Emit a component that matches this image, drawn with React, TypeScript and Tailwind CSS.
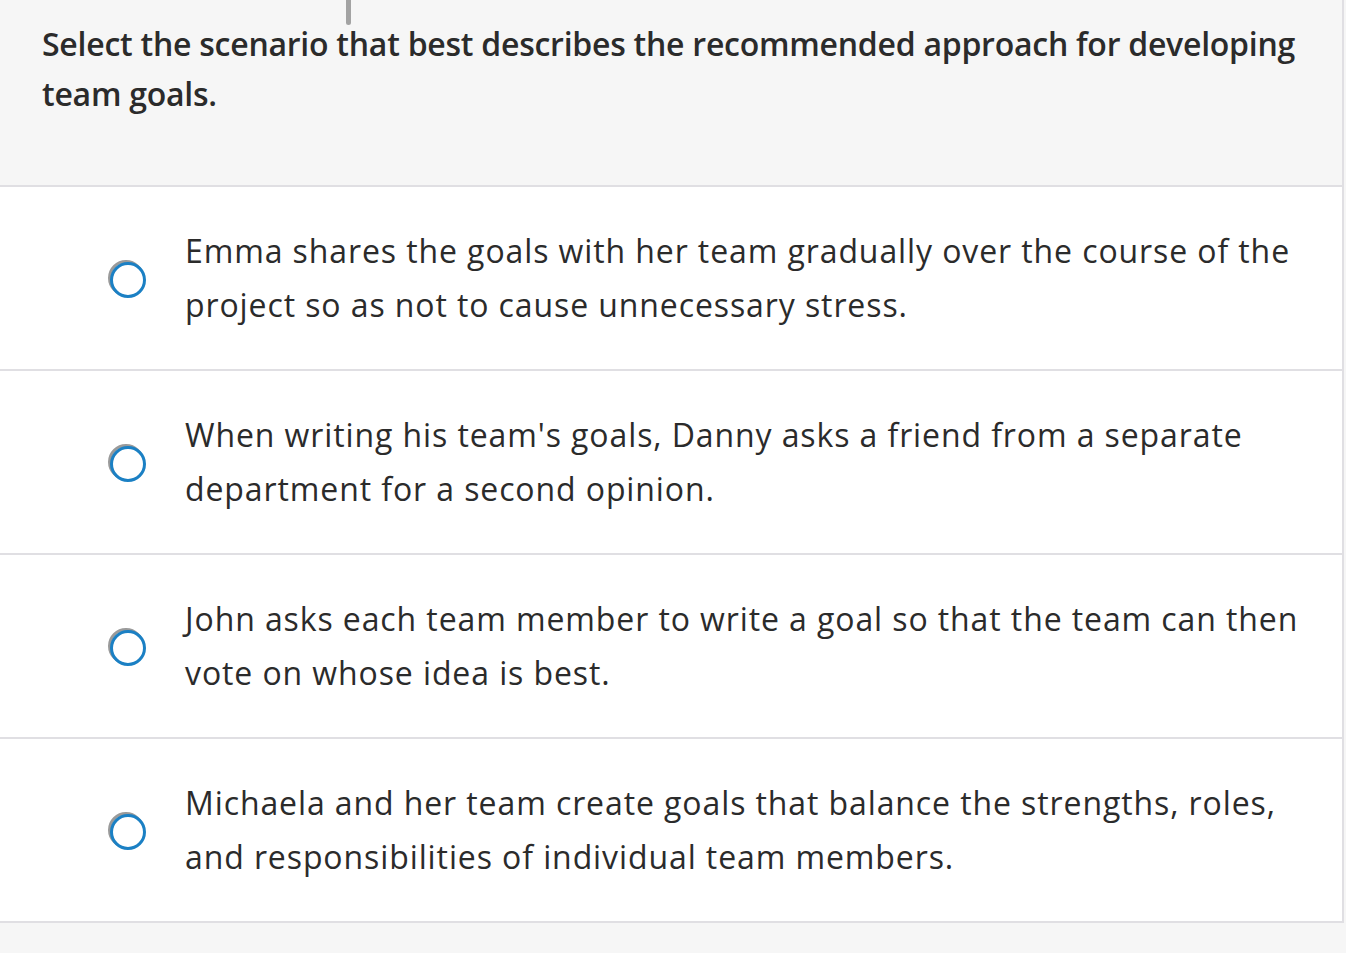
import React from "react";

const options = [
  "Emma shares the goals with her team gradually over the course of the project so as not to cause unnecessary stress.",
  "When writing his team's goals, Danny asks a friend from a separate department for a second opinion.",
  "John asks each team member to write a goal so that the team can then vote on whose idea is best.",
  "Michaela and her team create goals that balance the strengths, roles, and responsibilities of individual team members.",
];

const Radio: React.FC = () => (
  <div className="relative w-[36px] h-[36px] shrink-0">
    <div className="absolute -left-[2px] -top-[2px] w-[36px] h-[36px] rounded-full border-[3px] border-[#9a9a9a]" />
    <div className="absolute inset-0 rounded-full border-[3px] border-[#1b80c4] bg-white" />
  </div>
);

const App: React.FC = () => {
  return (
    <div
      className="relative min-h-[953px] bg-[#f6f6f6] text-[#2b2b2b]"
      style={{ fontFamily: "'Open Sans', Lato, sans-serif" }}
    >
      <div className="absolute left-[346px] top-0 w-[5px] h-[25px] rounded-b bg-[#a3a3a3]" />
      <div className="w-[1344px] border-r-2 border-[#e0dfe3]">
        <div className="h-[187px] border-b-2 border-[#e0dfe3] pl-[42px] pr-[36px] pt-[19px]">
          <p className="text-[32px] leading-[50px] font-semibold tracking-[-0.25px]">
            Select the scenario that best describes the recommended approach for developing team goals.
          </p>
        </div>
        {options.map((text) => (
          <div
            key={text}
            className="h-[184px] bg-white border-b-2 border-[#e0dfe3] flex items-center"
          >
            <div className="w-[185px] pl-[110px] pt-[4px] flex">
              <Radio />
            </div>
            <p className="flex-1 pr-[30px] text-[32px] leading-[54px] tracking-[0.9px]">{text}</p>
          </div>
        ))}
      </div>
    </div>
  );
};

export default App;
